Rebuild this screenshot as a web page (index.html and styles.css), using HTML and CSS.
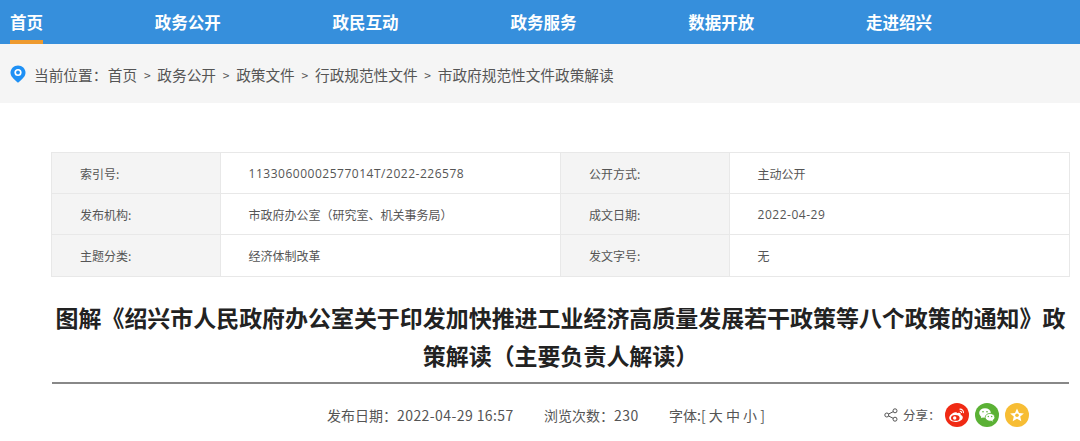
FILE: index.html
```html
<!DOCTYPE html>
<html lang="zh-CN">
<head>
<meta charset="utf-8">
<title>市府规范性文件政策解读</title>
<link rel="stylesheet" href="styles.css">
</head>
<body>
<nav class="nav">
  <a class="nav-item active">首页</a>
  <a class="nav-item">政务公开</a>
  <a class="nav-item">政民互动</a>
  <a class="nav-item">政务服务</a>
  <a class="nav-item">数据开放</a>
  <a class="nav-item">走进绍兴</a>
</nav>
<div class="crumbs">
  <svg class="pin" viewBox="0 0 16 18" width="16" height="18"><path fill="#1e90f5" d="M8 .5C3.800.5.500 3.700.500 7.800c0 2.900 2.300 6 7.500 9.900 5.200-3.900 7.500-7 7.500-9.900C15.500 3.700 12.200.5 8 .5z"/><circle cx="8" cy="7.500" r="3.600" fill="#fff"/><circle cx="8" cy="7.500" r="1.900" fill="#1e90f5"/></svg>
  <span class="crumb-label">当前位置：</span>
  <span>首页</span><span class="sep">&gt;</span>
  <span>政务公开</span><span class="sep">&gt;</span>
  <span>政策文件</span><span class="sep">&gt;</span>
  <span>行政规范性文件</span><span class="sep">&gt;</span>
  <span>市政府规范性文件政策解读</span>
</div>
<main class="main">
  <table class="info">
    <tr>
      <th>索引号:</th><td class="num">11330600002577014T/2022-226578</td>
      <th>公开方式:</th><td>主动公开</td>
    </tr>
    <tr>
      <th>发布机构:</th><td>市政府办公室（研究室、机关事务局）</td>
      <th>成文日期:</th><td class="num">2022-04-29</td>
    </tr>
    <tr>
      <th>主题分类:</th><td>经济体制改革</td>
      <th>发文字号:</th><td>无</td>
    </tr>
  </table>
  <h1 class="title">图解《绍兴市人民政府办公室关于印发加快推进工业经济高质量发展若干政策等八个政策的通知》政策解读（主要负责人解读）</h1>
  <div class="meta">
    <span class="date">发布日期：<span class="digits">2022-04-29 16:57</span></span>
    <span class="views">浏览次数：<span class="digits">230</span></span>
    <span class="size">字体:[ 大 中 小 ]</span>
    <svg class="share-ic" viewBox="0 0 14 14" width="14" height="14" fill="none" stroke="#555" stroke-width="1"><circle cx="2.800" cy="7" r="2"/><circle cx="11" cy="2.800" r="2"/><circle cx="11" cy="11.200" r="2"/><path d="M4.600 6 9.200 3.700M4.600 8 9.200 10.300"/></svg>
    <span class="share-label">分享：</span>
    <span class="circle weibo"><svg viewBox="0 0 24 24" width="24" height="24"><path fill="#fff" d="M10.500 9.300c-3.400.6-6.300 3.300-6.300 5.700 0 2.300 2.800 3.900 6.300 3.900 4 0 7.300-2.200 7.300-4.500 0-1.300-1.200-2-2.200-2.300.5-1.300.1-2.300-1.800-2.300-.8 0-1.600.3-2 .4.200-.9-.1-1.300-1.300-.9z"/><ellipse cx="10.300" cy="14.900" rx="4.300" ry="2.900" fill="#f02a14"/><circle cx="9.700" cy="15" r="1.700" fill="#fff"/><path fill="none" stroke="#fff" stroke-width="1.100" d="M14.500 6.200c2.500-.3 4.300 1.500 3.900 3.900M14.800 8.200c1.200-.1 1.900.6 1.700 1.800"/></svg></span>
    <span class="circle wechat"><svg viewBox="0 0 24 24" width="24" height="24"><ellipse cx="10" cy="10" rx="5.800" ry="4.800" fill="#fff"/><path fill="#fff" d="m6.500 13 -.6 2.300 2.600-1.300z"/><ellipse cx="15" cy="14.300" rx="4.800" ry="3.900" fill="#fff" stroke="#5bb135" stroke-width=".8"/><path fill="#fff" d="m17.300 17 1 1.800-2.600-1.200z"/><circle cx="8" cy="8.800" r=".8" fill="#5bb135"/><circle cx="12" cy="8.800" r=".8" fill="#5bb135"/><circle cx="13.300" cy="13.500" r=".7" fill="#5bb135"/><circle cx="16.700" cy="13.500" r=".7" fill="#5bb135"/></svg></span>
    <span class="circle star"><svg viewBox="0 0 24 24" width="24" height="24"><path fill="#fff" d="m12 5.500 2 4.400 4.900.5-3.700 3.200 1.100 4.700-4.300-2.500-4.300 2.500 1.100-4.700-3.700-3.200 4.900-.5z"/><circle cx="12" cy="12.300" r="1.800" fill="#f7bd34"/></svg></span>
  </div>
</main>
</body>
</html>
```
FILE: styles.css
```css
* { box-sizing: border-box; }
html, body { margin: 0; padding: 0; }
body {
  width: 1080px;
  height: 441px;
  overflow: hidden;
  background: #fff;
  font-family: "Noto Sans CJK SC", "Open Sans", sans-serif;
  color: #444;
}
.nav {
  display: flex;
  gap: 111.800px;
  height: 44px;
  padding-left: 10px;
  background: #368fdc;
}
.nav-item {
  height: 44px;
  line-height: 44px;
  font-size: 16.500px;
  font-weight: 700;
  color: #fff;
}
.nav-item.active { border-bottom: 4px solid #ee9a2f; }
.crumbs {
  display: flex;
  align-items: center;
  height: 59px;
  padding: 1px 0 0 10px;
  background: #f5f5f5;
  font-size: 14.670px;
  color: #555;
}
.pin { margin: 0 8px 0 0; flex: none; }
.crumb-label { width: 73.800px; flex: none; }
.sep { width: 20.200px; text-align: center; font-size: 12px; flex: none; }
.main { padding: 49px 11px 0 51px; }
.info {
  width: 1018px;
  table-layout: fixed;
  border-collapse: collapse;
  font-size: 12px;
  color: #555;
}
.info th, .info td {
  height: 41.200px;
  border: 1.500px solid #e8e8e8;
  font-weight: 400;
  text-align: left;
  padding: 0 0 0 28px;
}
.info td { padding-left: 27.500px; }
.info th { width: 169px; background: #f4f4f4; }
.info td { width: 340px; }
.num { letter-spacing: .52px; font-family: "Open Sans", "Noto Sans CJK SC", sans-serif; }
.title {
  margin: 21px 0 0 1px;
  padding-bottom: 8px;
  border-bottom: 2px solid #888;
  text-align: center;
  font-size: 22.960px;
  line-height: 38px;
  font-weight: 700;
  color: #222;
}
.meta {
  display: flex;
  align-items: center;
  height: 24px;
  margin: 19px 0 0 1px;
  padding-left: 275px;
  font-size: 14px;
  color: #555;
}
.digits { letter-spacing: .42px; }
.date { width: 217px; flex: none; }
.views { width: 125px; flex: none; }
.size { width: 215px; flex: none; }
.share-ic { flex: none; }
.share-label { width: 42px; margin-left: 5px; font-size: 12.500px; flex: none; }
.circle {
  display: block;
  width: 24px;
  height: 24px;
  margin-right: 6px;
  border-radius: 50%;
  flex: none;
}
.circle svg { display: block; }
.weibo { background: #f02a14; }
.wechat { background: #5bb135; }
.star { background: #f7bd34; }
```
